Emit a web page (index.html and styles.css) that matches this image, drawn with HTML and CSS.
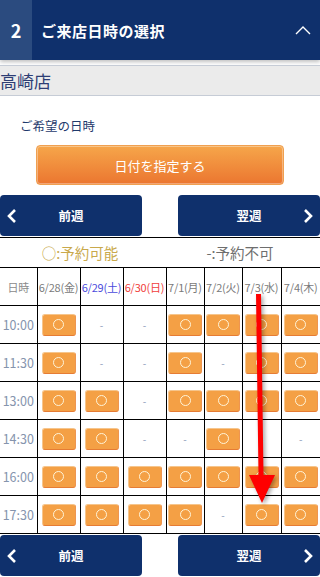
FILE: index.html
```html
<!DOCTYPE html>
<html lang="ja">
<head>
  <meta charset="UTF-8" />
  <meta name="viewport" content="width=device-width, initial-scale=1.0"/>
  <title>ご来店日時の選択</title>
  <link rel="stylesheet" href="styles.css">
</head>
<body>
<div class="page">
  <header class="step-head">
    <span class="step-num">2</span>
    <h2 class="step-title">ご来店日時の選択</h2>
    <svg class="step-toggle" viewBox="0 0 16 9"><path d="M1 8 L8 1 L15 8" /></svg>
  </header>

  <div class="shop-name">高崎店</div>
  <p class="label">ご希望の日時</p>
  <button class="date-btn">日付を指定する</button>

  <nav class="week-nav">
    <a class="week-btn" href="#">
      <svg class="chev" viewBox="0 0 10 14"><path d="M8 1 L2 7 L8 13" /></svg>
      <span>前週</span>
    </a>
    <a class="week-btn" href="#">
      <span></span>
      <span>翌週</span>
      <svg class="chev" viewBox="0 0 10 14"><path d="M2 1 L8 7 L2 13" /></svg>
    </a>
  </nav>

  <div class="calendar">
    <div class="legend">
      <span class="ok">○:予約可能</span>
      <span class="ng">-:予約不可</span>
    </div>
    <table class="slots">
      <colgroup>
        <col style="width:37px"><col style="width:43px"><col style="width:43px"><col style="width:43px">
        <col style="width:38px"><col style="width:38px"><col style="width:39px"><col style="width:39px">
      </colgroup>
      <tr class="days">
        <th class="time">日時</th>
        <th>6/28(金)</th>
        <th class="sat">6/29(土)</th>
        <th class="sun">6/30(日)</th>
        <th>7/1(月)</th>
        <th>7/2(火)</th>
        <th>7/3(水)</th>
        <th>7/4(木)</th>
      </tr>
      <tr>
        <td class="time">10:00</td>
        <td><a class="slot" href="#"><i></i></a></td>
        <td class="none">-</td>
        <td class="none">-</td>
        <td><a class="slot" href="#"><i></i></a></td>
        <td><a class="slot" href="#"><i></i></a></td>
        <td><a class="slot" href="#"><i></i></a></td>
        <td><a class="slot" href="#"><i></i></a></td>
      </tr>
      <tr>
        <td class="time">11:30</td>
        <td><a class="slot" href="#"><i></i></a></td>
        <td class="none">-</td>
        <td class="none">-</td>
        <td><a class="slot" href="#"><i></i></a></td>
        <td class="none">-</td>
        <td><a class="slot" href="#"><i></i></a></td>
        <td><a class="slot" href="#"><i></i></a></td>
      </tr>
      <tr>
        <td class="time">13:00</td>
        <td><a class="slot" href="#"><i></i></a></td>
        <td><a class="slot" href="#"><i></i></a></td>
        <td class="none">-</td>
        <td><a class="slot" href="#"><i></i></a></td>
        <td><a class="slot" href="#"><i></i></a></td>
        <td><a class="slot" href="#"><i></i></a></td>
        <td><a class="slot" href="#"><i></i></a></td>
      </tr>
      <tr>
        <td class="time">14:30</td>
        <td><a class="slot" href="#"><i></i></a></td>
        <td><a class="slot" href="#"><i></i></a></td>
        <td class="none">-</td>
        <td class="none">-</td>
        <td><a class="slot" href="#"><i></i></a></td>
        <td class="none">-</td>
        <td class="none">-</td>
      </tr>
      <tr>
        <td class="time">16:00</td>
        <td><a class="slot" href="#"><i></i></a></td>
        <td><a class="slot" href="#"><i></i></a></td>
        <td><a class="slot" href="#"><i></i></a></td>
        <td><a class="slot" href="#"><i></i></a></td>
        <td><a class="slot" href="#"><i></i></a></td>
        <td><a class="slot" href="#"><i></i></a></td>
        <td><a class="slot" href="#"><i></i></a></td>
      </tr>
      <tr>
        <td class="time">17:30</td>
        <td><a class="slot" href="#"><i></i></a></td>
        <td><a class="slot" href="#"><i></i></a></td>
        <td><a class="slot" href="#"><i></i></a></td>
        <td><a class="slot" href="#"><i></i></a></td>
        <td class="none">-</td>
        <td><a class="slot" href="#"><i></i></a></td>
        <td><a class="slot" href="#"><i></i></a></td>
      </tr>
    </table>
  </div>

  <nav class="week-nav bottom">
    <a class="week-btn" href="#">
      <svg class="chev" viewBox="0 0 10 14"><path d="M8 1 L2 7 L8 13" /></svg>
      <span>前週</span>
    </a>
    <a class="week-btn" href="#">
      <span></span>
      <span>翌週</span>
      <svg class="chev" viewBox="0 0 10 14"><path d="M2 1 L8 7 L2 13" /></svg>
    </a>
  </nav>

  <!-- 注釈の矢印 -->
  <svg class="arrow" viewBox="0 0 320 577">
    <polygon points="256,294 261,294 263.5,475 275,475 262,503 249,475 258.5,475" />
  </svg>
</div>
</body>
</html>
```

FILE: styles.css
```css
body {
  margin: 0;
  background: #fff;
  font-family: "Noto Sans CJK JP", "Noto Sans", sans-serif;
}
.page {
  position: relative;
  width: 320px;
  overflow: hidden;
}
.step-head {
  display: flex;
  align-items: center;
  height: 60px;
  background: #0f306c;
  color: #fff;
  box-shadow: 0 2px 4px rgba(0, 0, 0, 0.25);
}
.step-num {
  width: 32px;
  align-self: stretch;
  display: flex;
  align-items: center;
  justify-content: center;
  background: #2b4b7f;
  font-size: 18px;
  font-weight: bold;
}
.step-title {
  flex: 1;
  margin: 0 0 0 9px;
  font-size: 15px;
  font-weight: bold;
  letter-spacing: 0.5px;
}
.step-toggle {
  width: 16px;
  height: 9px;
  margin-right: 9px;
  fill: none;
  stroke: #fff;
  stroke-width: 1.4;
}
.shop-name {
  margin-top: 5px;
  height: 29px;
  line-height: 29px;
  background: #ebebeb;
  border-top: 1px solid #c6ccd6;
  border-bottom: 1px solid #c6ccd6;
  font-size: 17px;
  color: #2d3d74;
}
.label {
  margin: 20px 0 0 20px;
  font-size: 12.5px;
  line-height: 20px;
  color: #1f3a6c;
}
.date-btn {
  display: block;
  width: 248px;
  height: 40px;
  margin: 9px auto 0;
  padding: 0;
  border: 1px solid #f0a050;
  border-radius: 4px;
  background: linear-gradient(#f6a64a, #eb7630);
  box-shadow: inset 0 0 0 1px rgba(255, 255, 255, 0.35);
  color: #fff;
  font-family: inherit;
  font-size: 13px;
}
.week-nav {
  display: flex;
  justify-content: space-between;
  margin-top: 10px;
}
.week-nav.bottom {
  margin-top: 1px;
}
.week-btn {
  display: grid;
  grid-template-columns: 24px 1fr 24px;
  align-items: center;
  width: 142px;
  height: 41px;
  background: #0f306c;
  border-radius: 4px;
  color: #fff;
  text-decoration: none;
  font-size: 12.5px;
  font-weight: bold;
  text-align: center;
}
.chev {
  width: 10px;
  height: 14px;
  justify-self: center;
  fill: none;
  stroke: #fff;
  stroke-width: 2.6;
}
.calendar {
  margin-top: 1px;
  border-top: 1px solid #000;
}
.legend {
  display: flex;
  height: 29px;
  align-items: center;
  font-size: 14.5px;
}
.legend span {
  flex: 1;
  text-align: center;
}
.legend .ok {
  color: #c9a94c;
}
.legend .ng {
  color: #6e6e6e;
}
.slots {
  width: 320px;
  border-collapse: collapse;
  table-layout: fixed;
}
.slots th,
.slots td {
  height: 37px;
  padding: 0;
  border: 1px solid #000;
  text-align: center;
  vertical-align: middle;
  white-space: nowrap;
}
.slots th:first-child,
.slots td:first-child {
  border-left: none;
}
.slots th:last-child,
.slots td:last-child {
  border-right: none;
}
.slots th {
  font-size: 11px;
  font-weight: normal;
  color: #7a7a7a;
  letter-spacing: -0.2px;
}
.slots th.time {
  color: #8a8a8a;
  font-size: 11px;
}
.slots th.sat {
  color: #4b4bdc;
}
.slots th.sun {
  color: #f0403c;
}
.slots td.time {
  font-size: 12.5px;
  color: #8594ad;
}
.slots td.none {
  font-size: 10px;
  color: #8a9ab8;
}
.slot {
  display: flex;
  align-items: center;
  justify-content: center;
  width: 34px;
  height: 22px;
  margin: 0 auto;
  box-sizing: border-box;
  background: #f4a045;
  border: 1px solid #f6c58c;
  border-bottom-color: #e67c34;
  border-right-color: #ee9550;
  border-radius: 3px;
}
.slot i {
  width: 9px;
  height: 9px;
  border: 1.3px solid #fff4d8;
  border-radius: 50%;
}
.arrow {
  position: absolute;
  left: 0;
  top: 0;
  width: 320px;
  height: 577px;
  pointer-events: none;
  fill: #ff0000;
  filter: drop-shadow(2px 2px 2px rgba(0, 0, 0, 0.35));
}
```
